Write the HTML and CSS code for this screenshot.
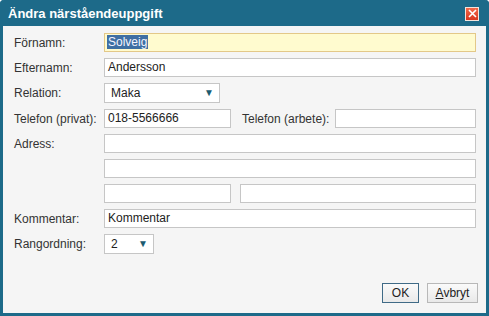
FILE: index.html
```html
<!DOCTYPE html>
<html lang="sv">
<head>
    <meta charset="UTF-8">
    <link rel="stylesheet" href="styles.css">
</head>
<body>
    <div class="dialog">
        <div class="dialog-title">
            <span>Ändra närståendeuppgift</span>
            <button class="close-button">
                <svg viewBox="0 0 11 11" width="11" height="11">
                    <path d="M2 2L9 9M9 2L2 9" stroke="white" stroke-width="1.6"/>
                </svg>
            </button>
        </div>

        <div class="dialog-body">
            <div class="form-row">
                <label class="label">Förnamn:</label>
                <div class="field field-focus"><span class="selected">Solveig</span></div>
            </div>
            <div class="form-row">
                <label class="label">Efternamn:</label>
                <div class="field">Andersson</div>
            </div>
            <div class="form-row">
                <label class="label">Relation:</label>
                <div class="select select-relation">Maka<span class="arrow">▼</span></div>
            </div>
            <div class="form-row">
                <label class="label">Telefon (privat):</label>
                <div class="field field-short">018-5566666</div>
                <label class="label label-inline">Telefon (arbete):</label>
                <div class="field"></div>
            </div>
            <div class="form-row">
                <label class="label">Adress:</label>
                <div class="field"></div>
            </div>
            <div class="form-row">
                <span class="label"></span>
                <div class="field"></div>
            </div>
            <div class="form-row">
                <span class="label"></span>
                <div class="field field-short"></div>
                <div class="field field-zip"></div>
            </div>
            <div class="form-row">
                <label class="label">Kommentar:</label>
                <div class="field">Kommentar</div>
            </div>
            <div class="form-row">
                <label class="label">Rangordning:</label>
                <div class="select select-rank">2<span class="arrow">▼</span></div>
            </div>
        </div>

        <div class="dialog-buttons">
            <button class="btn btn-default">OK</button>
            <button class="btn btn-cancel"><u>A</u>vbryt</button>
        </div>
    </div>
</body>
</html>
```

FILE: styles.css
```css
body {
    margin: 0;
    padding: 0;
    background: #ffffff;
    font-family: 'Liberation Sans', Arial, sans-serif;
    font-size: 12px;
    color: #222;
}

.dialog {
    width: 489px;
    height: 316px;
    box-sizing: border-box;
    background: #f5f5f5;
    border: 3px solid #1d6a89;
    border-top: none;
    border-radius: 4px 4px 0 0;
    display: flex;
    flex-direction: column;
}

.dialog-title {
    height: 26px;
    margin: 0 -3px;
    padding: 0 10px 0 8px;
    background: #1d6a89;
    border-radius: 4px 4px 0 0;
    color: white;
    font-weight: bold;
    font-size: 13px;
    display: flex;
    align-items: center;
    justify-content: space-between;
}

.close-button {
    width: 14px;
    height: 14px;
    padding: 0;
    border: 1px solid #f4e4dc;
    background: linear-gradient(#f2694a, #d8361e);
    display: flex;
    align-items: center;
    justify-content: center;
    margin-top: 1px;
}

.dialog-body {
    padding: 7px 10px 0 11px;
    display: flex;
    flex-direction: column;
    gap: 6px;
}

.form-row {
    display: flex;
    align-items: center;
}

.label {
    width: 90px;
    flex-shrink: 0;
    color: #333;
}

.label-inline {
    width: auto;
    margin: 0 6px 0 11px;
}

.field {
    flex: 1;
    height: 19px;
    box-sizing: border-box;
    border: 1px solid #c6c6c6;
    background: white;
    padding: 0 3px;
    line-height: 17px;
    color: #222;
}

.field-focus {
    background: #fffbcf;
    border-color: #e3c888;
    padding-left: 2px;
}

.selected {
    background: #3f6fa3;
    color: #f4f4ff;
    padding: 0 1px;
}

.field-short {
    flex: 0 0 127px;
}

.field-zip {
    margin-left: 9px;
}

.select {
    height: 20px;
    box-sizing: border-box;
    border: 1px solid #c6c6c6;
    background: white;
    padding: 0 4px 0 6px;
    line-height: 18px;
    display: flex;
    justify-content: space-between;
}

.select-relation {
    width: 116px;
}

.select-rank {
    width: 50px;
}

.arrow {
    color: #1c5b70;
    font-size: 10px;
    padding-right: 1px;
}

.dialog-buttons {
    margin-top: auto;
    padding: 0 8px 10px 0;
    display: flex;
    justify-content: flex-end;
    gap: 8px;
}

.btn {
    height: 20px;
    padding: 0;
    font-family: 'Liberation Sans', Arial, sans-serif;
    font-size: 12px;
    color: #222;
    background: linear-gradient(#fafafa, #e9e9e9);
    border: 1px solid #b8b8b8;
}

.btn-default {
    width: 37px;
    border-color: #3f6a86;
}

.btn-cancel {
    width: 51px;
}
```
